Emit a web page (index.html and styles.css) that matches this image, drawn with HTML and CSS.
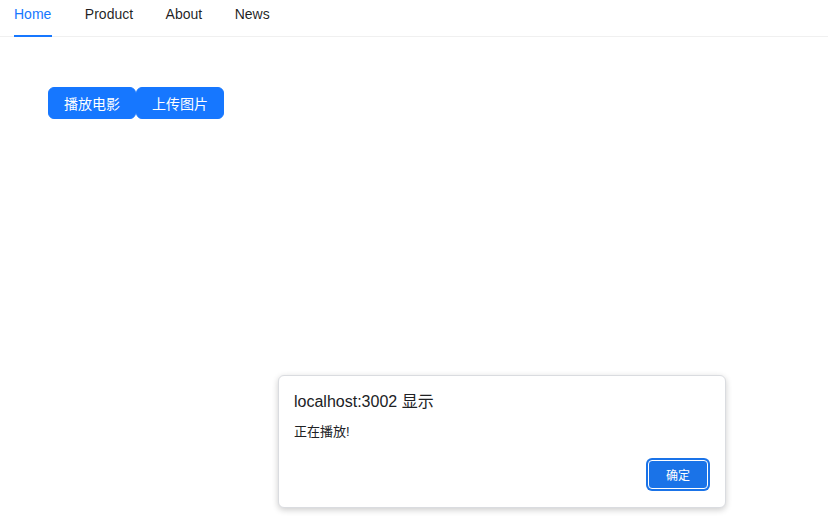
FILE: index.html
```html
<!DOCTYPE html>
<html lang="zh-CN">
<head>
  <meta charset="UTF-8">
  <meta name="viewport" content="width=device-width, initial-scale=1.0">
  <title>Home</title>
  <link rel="stylesheet" href="styles.css">
</head>
<body>
  <ul class="menu">
    <li class="menu-item active">Home</li>
    <li class="menu-item">Product</li>
    <li class="menu-item">About</li>
    <li class="menu-item">News</li>
  </ul>

  <div class="actions">
    <button class="btn">播放电影</button>
    <button class="btn">上传图片</button>
  </div>

  <!-- 浏览器 alert 弹窗 -->
  <div class="dialog">
    <div class="dialog-title">localhost:3002 显示</div>
    <div class="dialog-msg">正在播放!</div>
    <div class="dialog-foot">
      <button class="dialog-ok">确定</button>
    </div>
  </div>
</body>
</html>
```

FILE: styles.css
```css
* {
  margin: 0;
  padding: 0;
  box-sizing: border-box;
}

body {
  font-family: "Liberation Sans", "Noto Sans CJK SC", sans-serif;
  font-size: 14px;
  color: rgba(0, 0, 0, 0.88);
  background: #fff;
  height: 527px;
}

.menu {
  display: flex;
  list-style: none;
  height: 37px;
  padding-left: 14px;
  border-bottom: 1px solid #f0f0f0;
}

.menu-item {
  position: relative;
  line-height: 28px;
  margin-right: 32.5px;
  cursor: pointer;
}

.menu-item.active {
  color: #1677ff;
  padding-right: 1px;
}

.menu-item.active::after {
  content: "";
  position: absolute;
  left: 0;
  right: 0;
  bottom: -1px;
  height: 2px;
  background: #1677ff;
}

.actions {
  display: flex;
  padding: 50px 0 0 48px;
}

.btn {
  height: 32px;
  padding: 0 15px;
  border: 1px solid #1677ff;
  border-radius: 6px;
  background: #1677ff;
  color: #fff;
  font-family: inherit;
  font-size: 14px;
  cursor: pointer;
}

.dialog {
  position: absolute;
  left: 278px;
  top: 375px;
  width: 448px;
  height: 133px;
  padding: 16px 15px 16px 15px;
  background: #fff;
  border: 1px solid #dadce0;
  border-radius: 6px;
  box-shadow: 0 2px 6px rgba(0, 0, 0, 0.2);
}

.dialog-title {
  font-size: 16px;
  line-height: 20px;
  color: #202124;
}

.dialog-msg {
  margin-top: 11px;
  font-size: 13px;
  line-height: 18px;
  color: #202124;
}

.dialog-foot {
  display: flex;
  justify-content: flex-end;
  margin-top: 19px;
  padding-right: 2px;
}

.dialog-ok {
  width: 60px;
  height: 29px;
  border: 1px solid #fff;
  border-radius: 4px;
  background: #1a73e8;
  box-shadow: 0 0 0 2px #1a73e8;
  color: #fff;
  font-family: inherit;
  font-size: 12px;
}
```
